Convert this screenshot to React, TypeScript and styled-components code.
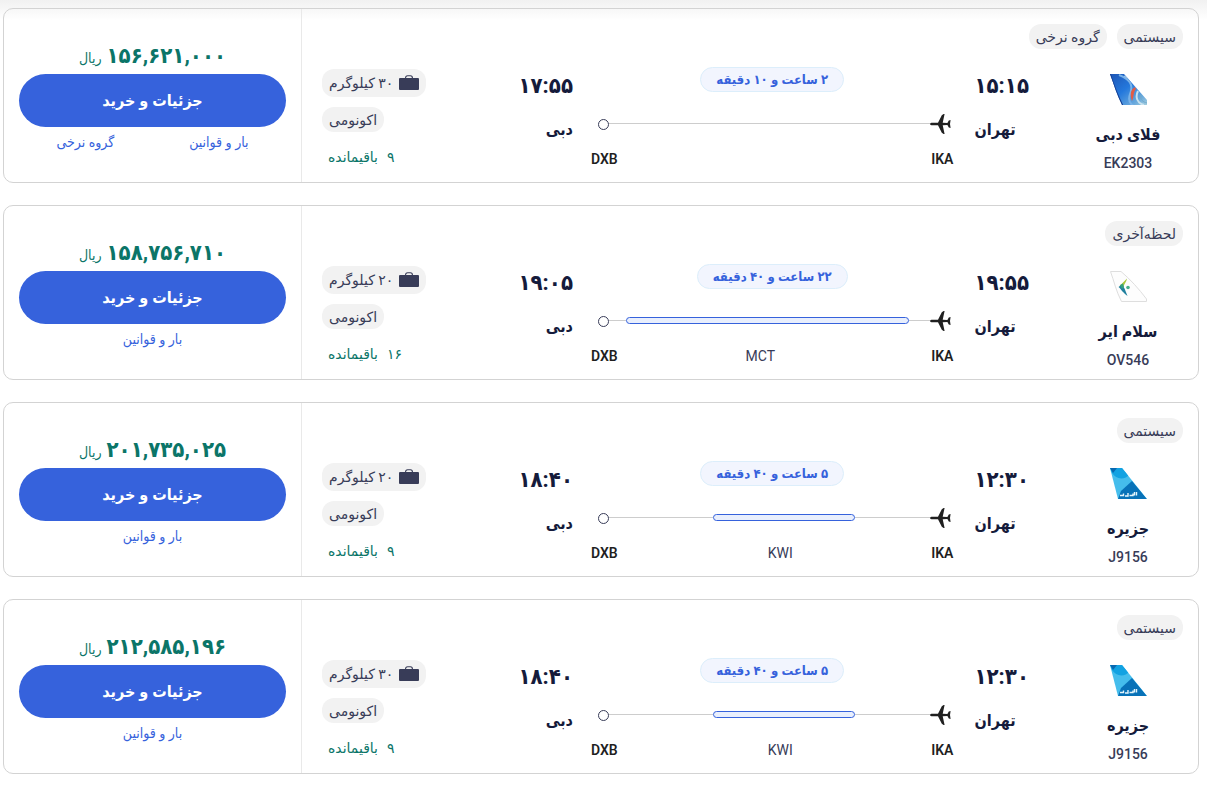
import React from "react";
import styled, { createGlobalStyle } from "styled-components";

const navy = "#151b3b";
const slate = "#383c58";
const blue = "#3662dc";
const green = "#0b7568";
const wideFont = `Roboto, "DejaVu Sans", sans-serif`;

const GlobalStyle = createGlobalStyle`
  * { box-sizing: border-box; }
  body {
    margin: 0;
    background: #fff linear-gradient(#f1f1f1, #fff 20px) no-repeat;
    color: ${navy};
    font-family: Roboto, "DejaVu Sans Condensed", "DejaVu Sans", sans-serif;
    font-size: 14px;
    line-height: 20px;
  }
`;

const List = styled.main`
  display: flex;
  flex-direction: column;
  gap: 22px;
  padding: 8px 8px 12px 3px;
`;

const Card = styled.article`
  display: flex;
  min-height: 175px;
  border: 1px solid #d3d3d3;
  border-radius: 10px;
`;

const Details = styled.section`
  flex: 1;
  min-width: 0;
  padding: 15px 15px 0 20px;
`;

const Tags = styled.div`
  display: flex;
  gap: 10px;
  height: 25px;
`;

const Tag = styled.span`
  display: inline-flex;
  align-items: center;
  gap: 6px;
  height: 25px;
  padding: 0 7px;
  border-radius: 12px;
  background: #f2f2f2;
  color: ${slate};
  font-family: ${wideFont};
  white-space: nowrap;
`;

const BaggageTag = styled(Tag)`
  height: 28px;
`;

const Flight = styled.div`
  display: flex;
  padding-top: 18px;
`;

const Airline = styled.div`
  display: flex;
  flex-direction: column;
  align-items: center;
  width: 110px;
  margin-left: 44px;
  padding-top: 7px;
`;

const AirlineName = styled.strong`
  margin-top: 18px;
  font-size: 16px;
  line-height: 24px;
`;

const FlightNumber = styled.span`
  margin-top: 6px;
  color: ${slate};
  font-weight: 500;
`;

const Stop = styled.div`
  display: flex;
  flex-direction: column;
  gap: 20px;
  padding-top: 7px;
  font-weight: 700;
`;

const Departure = styled(Stop)`
  align-items: flex-end;
`;

const Arrival = styled(Stop)`
  align-items: flex-start;
  width: 131px;
`;

const Time = styled.time`
  font-size: 22px;
  line-height: 24px;
`;

const City = styled.span`
  font-size: 16px;
  line-height: 24px;
`;

const Route = styled.div`
  display: flex;
  flex: 1;
  flex-direction: column;
  align-items: center;
  margin: 0 21px 0 18px;
`;

const Duration = styled.span`
  height: 25px;
  padding: 0 15px;
  border: 1px solid #dceefb;
  border-radius: 13px;
  background: #f2f5fe;
  color: ${blue};
  font-size: 13px;
  font-weight: 700;
  line-height: 23px;
  white-space: nowrap;
`;

const Track = styled.div`
  display: flex;
  align-items: center;
  align-self: stretch;
  height: 20px;
  margin-top: 22px;
  padding: 0 2px 0 7px;
`;

const Line = styled.i<{ $grow: number }>`
  flex: ${(p) => p.$grow} 1 0;
  height: 1px;
  margin-bottom: 2px;
  background: #cdcdcd;
`;

const Layover = styled.i<{ $share: number }>`
  flex: 0 0 ${(p) => p.$share}%;
  height: 7px;
  margin-bottom: 2px;
  border: 1px solid ${blue};
  border-radius: 4px;
  background: #e9effd;
`;

const Dot = styled.i`
  width: 11px;
  height: 11px;
  border: 1px solid ${slate};
  border-radius: 50%;
`;

const Codes = styled.div`
  display: flex;
  align-self: stretch;
  justify-content: space-between;
  margin-top: 15px;
`;

const Code = styled.span`
  color: #1f1f1f;
  font-weight: 600;
`;

const Space = styled.i<{ $grow: number }>`
  flex: ${(p) => p.$grow} 1 0;
`;

const ViaCode = styled.span`
  color: ${slate};
`;

const Fare = styled.div`
  display: flex;
  flex-direction: column;
  align-items: flex-end;
  width: 120px;
  padding-top: 2px;
`;

const Cabin = styled(Tag)`
  margin-top: 10px;
`;

const Seats = styled.span`
  display: flex;
  gap: 9px;
  margin-top: 15px;
  padding-left: 6px;
  color: ${green};
  font-family: ${wideFont};
`;

const Purchase = styled.section`
  width: 298px;
  padding: 32px 15px 0;
  border-right: 1px solid #e9e9e9;
`;

const Price = styled.p`
  display: flex;
  align-items: baseline;
  justify-content: center;
  gap: 5px;
  height: 33px;
  margin: 0;
  color: ${green};
  font-weight: 500;
  line-height: 30px;
`;

const Amount = styled.strong`
  font-size: 22px;
  font-weight: 700;
`;

const BuyButton = styled.button`
  display: block;
  width: 100%;
  height: 53px;
  border: 0;
  border-radius: 27px;
  background: ${blue};
  color: #fff;
  font: inherit;
  font-size: 16px;
  font-weight: 700;
  cursor: pointer;
`;

const Links = styled.nav`
  display: flex;
  justify-content: space-around;
  margin-top: 5px;
`;

const TextLink = styled.a`
  color: ${blue};
  text-decoration: none;
`;

const Plane = () => (
  <svg width="21" height="20" viewBox="0 0 21 20" fill="#202020" aria-hidden="true">
    <path d="M0 10C0 9.1 1.2 8.8 2.4 8.8H8L11.800 1.200L13.600 0H14.6L12.7 8.8L17.4 9.1L18.800 6.6L20.600 6L20 10L20.600 14L18.800 13.400L17.4 10.9L12.7 11.2L14.6 20H13.600L11.800 18.800L8 11.2H2.4C1.2 11.2 0 10.9 0 10Z" />
  </svg>
);

const Suitcase = () => (
  <svg width="20" height="16" viewBox="0 0 20 16" aria-hidden="true">
    <rect x="0" y="3" width="20" height="12" rx="1" fill={slate} />
    <path d="M6.5 3.4C6.5 1.6 7.4.7 8.6.7h2.8c1.2 0 2.1.9 2.1 2.7" fill="none" stroke={slate} strokeWidth="1.1" />
  </svg>
);

const FlydubaiTail = () => (
  <svg width="37" height="31" viewBox="0 0 37 31" role="img" aria-label="فلای دبی">
    <defs>
      <clipPath id="flydubai"><path d="M0 0H14L37 26V31H12C7 21 4 11 0 0Z" /></clipPath>
      <linearGradient id="flydubaiSky" x1="0" y1="0" x2="1" y2="1">
        <stop offset="0" stopColor="#1d55b5" />
        <stop offset=".45" stopColor="#2478dc" />
        <stop offset=".8" stopColor="#69a9dc" />
        <stop offset="1" stopColor="#a5cfdf" />
      </linearGradient>
    </defs>
    <g clipPath="url(#flydubai)" fill="none">
      <rect width="37" height="31" fill="url(#flydubaiSky)" />
      <path d="M-1-1C3 12 7 22 12 32" stroke="#173d8f" strokeWidth="3" />
      <path d="M9 1C19 5 24 10 20 20C18 26 20 30 24 32" stroke="#79b2e8" strokeWidth="2" />
      <path d="M14 2C22 6 28 10 26 14" stroke="#a8cdea" strokeWidth="1" />
      <path d="M25 13C20 16 20 21 22 27C24 24 23 18 26 15Z" fill="#e25b45" />
      <path d="M28 17C25 23 27 29 34 31" stroke="#c9e2ee" strokeWidth="2" />
      <path d="M31 21C30 26 33 28 37 29" stroke="#74a9c9" />
    </g>
  </svg>
);

const SalamTail = () => (
  <svg width="37" height="31" viewBox="0 0 37 31" role="img" aria-label="سلام ایر">
    <path d="M.5.5H11C20 8 29 18 36.5 28V30.5H11.5C6 20 4 10 .5.5Z" fill="#fdfdfd" stroke="#dedede" />
    <path d="M17 7.5L9.5 15L13 17C14 13 16.5 11 17 7.5Z" fill="#a9c83c" />
    <path d="M8.500 16L12 13.500L14.500 17.500L17.500 25C13 22 11 18 8.500 16Z" fill="#20809e" />
    <path d="M10 14L13 12.500L14 16L12 18Z" fill="#35a17b" />
    <circle cx="18" cy="16.500" r="1.800" fill="#47ad8b" />
  </svg>
);

const JazeeraTail = () => (
  <svg width="37" height="31" viewBox="0 0 37 31" role="img" aria-label="جزیره">
    <clipPath id="jazeera"><path d="M0 0H12L37 31H8Z" /></clipPath>
    <g clipPath="url(#jazeera)">
      <rect width="37" height="31" fill="#45bdec" />
      <path d="M0 0H14L20 6C14 13 6 11 2 5Z" fill="#12a2e2" />
      <path d="M0 0H7L3 5Z" fill="#0868b0" />
      <path d="M22 13L11 23L8 31H37Z" fill="#0872b8" />
      <path d="M10 27.500H13.500V25.500M15 28H18V25M19.500 27.500H23V25.500M24.500 27.500V24M26.500 27.500V24" fill="none" stroke="#e4f5fc" strokeWidth="1.400" />
    </g>
  </svg>
);

type Via = {
  code: string;
  share: number;
  barAt: number;
  labelAt: number;
};

type FlightInfo = {
  tags: string[];
  logo: () => React.JSX.Element;
  airline: string;
  number: string;
  depart: string;
  arrive: string;
  duration: string;
  via?: Via;
  baggage: string;
  seats: string;
  price: string;
  links: string[];
};

const mct: Via = { code: "MCT", share: 80, barAt: 56, labelAt: 55 };
const kwi: Via = { code: "KWI", share: 40, barAt: 42, labelAt: 48 };

const flights: FlightInfo[] = [
  {
    tags: ["سیستمی", "گروه نرخی"], logo: FlydubaiTail, airline: "فلای دبی", number: "EK2303",
    depart: "۱۵:۱۵", arrive: "۱۷:۵۵", duration: "۲ ساعت و ۱۰ دقیقه",
    baggage: "۳۰ کیلوگرم", seats: "۹", price: "۱۵۶,۶۲۱,۰۰۰", links: ["بار و قوانین", "گروه نرخی"],
  },
  {
    tags: ["لحظه‌آخری"], logo: SalamTail, airline: "سلام ایر", number: "OV546",
    depart: "۱۹:۵۵", arrive: "۱۹:۰۵", duration: "۲۲ ساعت و ۴۰ دقیقه", via: mct,
    baggage: "۲۰ کیلوگرم", seats: "۱۶", price: "۱۵۸,۷۵۶,۷۱۰", links: ["بار و قوانین"],
  },
  {
    tags: ["سیستمی"], logo: JazeeraTail, airline: "جزیره", number: "J9156",
    depart: "۱۲:۳۰", arrive: "۱۸:۴۰", duration: "۵ ساعت و ۴۰ دقیقه", via: kwi,
    baggage: "۲۰ کیلوگرم", seats: "۹", price: "۲۰۱,۷۳۵,۰۲۵", links: ["بار و قوانین"],
  },
  {
    tags: ["سیستمی"], logo: JazeeraTail, airline: "جزیره", number: "J9156",
    depart: "۱۲:۳۰", arrive: "۱۸:۴۰", duration: "۵ ساعت و ۴۰ دقیقه", via: kwi,
    baggage: "۳۰ کیلوگرم", seats: "۹", price: "۲۱۲,۵۸۵,۱۹۶", links: ["بار و قوانین"],
  },
];

function RouteTrack({ via }: { via?: Via }) {
  return (
    <>
      <Track>
        <Plane />
        <Line $grow={via ? via.barAt : 100} />
        {via && (
          <>
            <Layover $share={via.share} />
            <Line $grow={100 - via.barAt} />
          </>
        )}
        <Dot />
      </Track>
      <Codes>
        <Code>IKA</Code>
        {via && (
          <>
            <Space $grow={via.labelAt} />
            <ViaCode>{via.code}</ViaCode>
            <Space $grow={100 - via.labelAt} />
          </>
        )}
        <Code>DXB</Code>
      </Codes>
    </>
  );
}

function FlightCard({ flight }: { flight: FlightInfo }) {
  const Logo = flight.logo;
  return (
    <Card>
      <Details>
        <Tags>{flight.tags.map((tag) => <Tag key={tag}>{tag}</Tag>)}</Tags>
        <Flight>
          <Airline>
            <Logo />
            <AirlineName>{flight.airline}</AirlineName>
            <FlightNumber>{flight.number}</FlightNumber>
          </Airline>
          <Departure>
            <Time>{flight.depart}</Time>
            <City>تهران</City>
          </Departure>
          <Route>
            <Duration>{flight.duration}</Duration>
            <RouteTrack via={flight.via} />
          </Route>
          <Arrival>
            <Time>{flight.arrive}</Time>
            <City>دبی</City>
          </Arrival>
          <Fare>
            <BaggageTag><Suitcase />{flight.baggage}</BaggageTag>
            <Cabin>اکونومی</Cabin>
            <Seats><span>{flight.seats}</span><span>باقیمانده</span></Seats>
          </Fare>
        </Flight>
      </Details>
      <Purchase>
        <Price><Amount>{flight.price}</Amount>ریال</Price>
        <BuyButton type="button">جزئیات و خرید</BuyButton>
        <Links>{flight.links.map((link) => <TextLink key={link} href="#">{link}</TextLink>)}</Links>
      </Purchase>
    </Card>
  );
}

export default function App() {
  return (
    <>
      <GlobalStyle />
      <List dir="rtl" lang="fa">
        {flights.map((flight, index) => <FlightCard key={index} flight={flight} />)}
      </List>
    </>
  );
}
